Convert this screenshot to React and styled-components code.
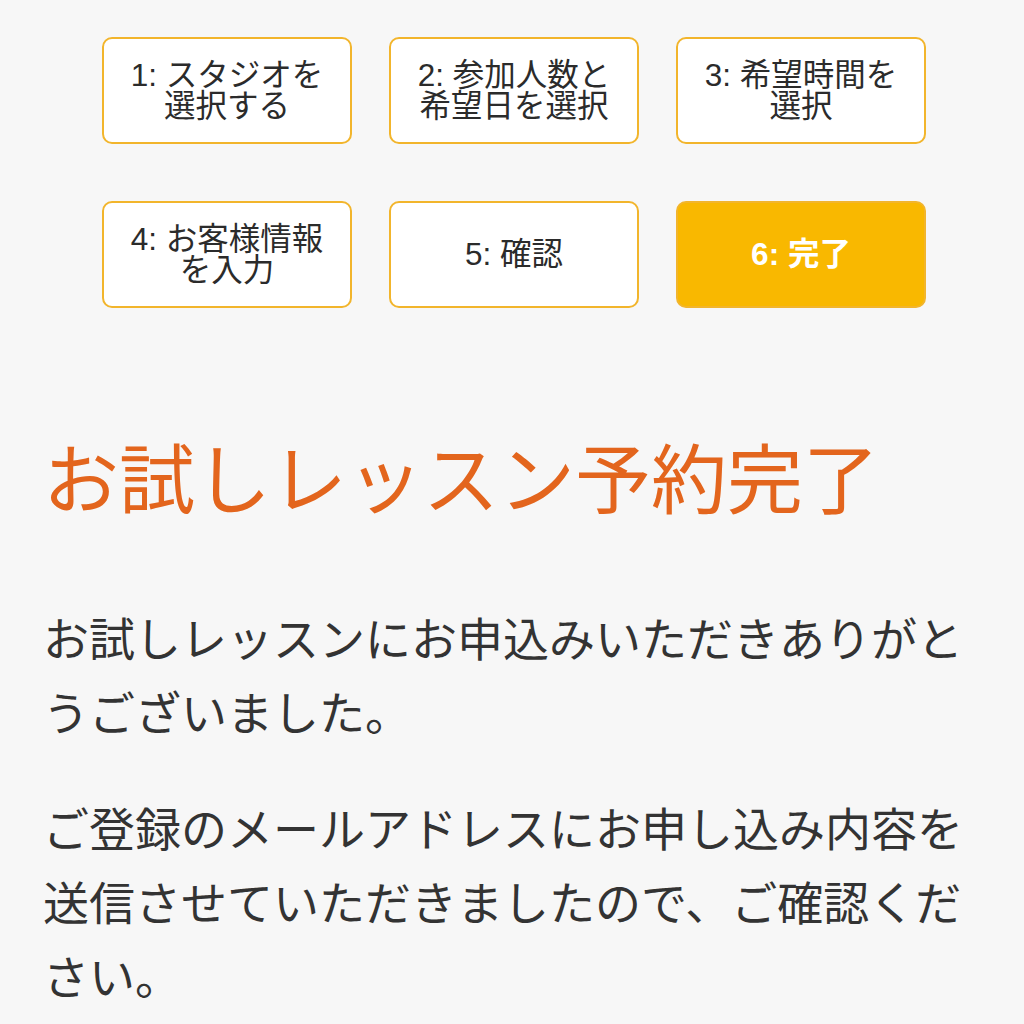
import React from "react";
import styled, { createGlobalStyle } from "styled-components";

const steps = [
  { no: 1, label: "スタジオを選択する" },
  { no: 2, label: "参加人数と希望日を選択" },
  { no: 3, label: "希望時間を選択" },
  { no: 4, label: "お客様情報を入力" },
  { no: 5, label: "確認" },
  { no: 6, label: "完了", active: true },
];

export default function App() {
  return (
    <>
      <GlobalStyle />
      <Page>
        <StepGrid>
          {steps.map((s) => (
            <Step key={s.no} active={s.active}>
              {s.no}: {s.label}
            </Step>
          ))}
        </StepGrid>
        <Content>
          <Heading>お試しレッスン予約完了</Heading>
          <Text>お試しレッスンにお申込みいただきありがとうございました。</Text>
          <Text>
            ご登録のメールアドレスにお申し込み内容を送信させていただきましたので、ご確認ください。
          </Text>
        </Content>
      </Page>
    </>
  );
}

const GlobalStyle = createGlobalStyle`
  html, body {
    margin: 0;
    padding: 0;
    background: #f7f7f7;
  }
  body {
    font-family: "Liberation Sans", "Noto Sans CJK JP", sans-serif;
    color: #333;
  }
`;

const Page = styled.div`
  width: 1024px;
  min-height: 1024px;
  background: #f7f7f7;
`;

const StepGrid = styled.div`
  display: grid;
  grid-template-columns: repeat(3, 1fr);
  column-gap: 37px;
  row-gap: 57px;
  padding: 37px 98px 0 102px;
`;

const Step = styled.div`
  height: 107px;
  box-sizing: border-box;
  display: flex;
  align-items: center;
  justify-content: center;
  text-align: center;
  padding: 0 14px;
  border-radius: 10px;
  border: 2px solid #f2b52c;
  background: ${(p) => (p.active ? "#f9b800" : "#ffffff")};
  color: ${(p) => (p.active ? "#ffffff" : "#2b2b2b")};
  font-weight: ${(p) => (p.active ? 700 : 400)};
  font-size: 31.5px;
  line-height: 31px;
`;

const Content = styled.div`
  padding: 0 43px;
`;

const Heading = styled.h1`
  margin: 122px 0 0;
  font-family: "Noto Sans CJK JP", sans-serif;
  font-weight: 400;
  font-size: 76px;
  line-height: 90px;
  color: #e3651d;
`;

const Text = styled.p`
  margin: 79px 0 0;
  font-family: "Noto Sans CJK JP", sans-serif;
  font-size: 46px;
  line-height: 74px;
  color: #333;
  & + & {
    margin-top: 42px;
  }
`;
